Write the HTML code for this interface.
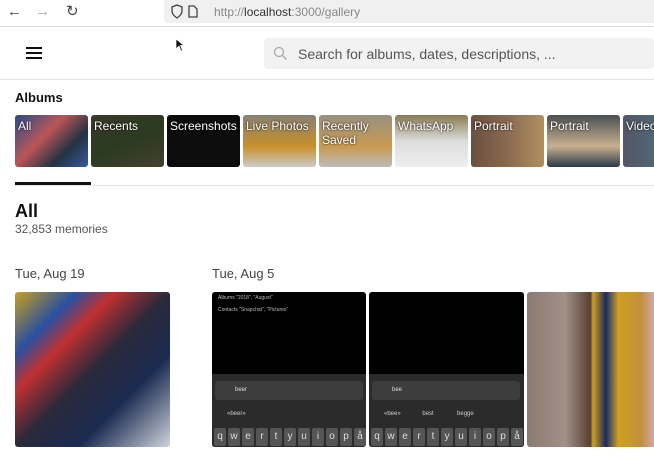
<!DOCTYPE html>
<html><head><meta charset="utf-8"><style>
*{margin:0;padding:0;box-sizing:border-box}
body{width:654px;height:459px;overflow:hidden;background:#fff;font-family:"Liberation Sans",sans-serif;position:relative;color:#111}
.a{position:absolute}
.th{position:absolute;top:115px;width:73px;height:52px;border-radius:3px;color:#fff;font-size:12px;padding:4px 3px;line-height:14px;overflow:hidden;text-shadow:0 0 2px #000}
.k{display:inline-block;width:12px;height:18px;background:#555;margin-right:2px;border-radius:2px;color:#ddd;font-size:10px;text-align:center;line-height:18px}
</style></head><body>
<div class="a" style="left:0;top:0;width:654px;height:27px;background:#fff;border-bottom:1px solid #ddd"></div>
<div class="a" style="left:7px;top:3px;font-size:15px;color:#444">←</div>
<div class="a" style="left:35px;top:3px;font-size:15px;color:#aaa">→</div>
<div class="a" style="left:66px;top:2px;font-size:15px;color:#444">↻</div>
<div class="a" style="left:164px;top:0;width:490px;height:23px;background:#f0f0f0;border-radius:0 0 0 4px"></div>
<svg class="a" style="left:170px;top:4px" width="30" height="15"><path d="M7 1 L12 3 V7 C12 10 10 12 7 14 C4 12 2 10 2 7 V3 Z" fill="none" stroke="#444" stroke-width="1.3"/><path d="M19 2 H24 L27 5 V13 H19 Z" fill="none" stroke="#444" stroke-width="1.3"/></svg>
<div class="a" style="left:214px;top:5px;font-size:12px;color:#888">http://<span style="color:#333">localhost</span>:3000/gallery</div>
<div class="a" style="left:26px;top:47px;width:16px;height:2px;background:#111;box-shadow:0 5px 0 #111,0 10px 0 #111"></div>
<div class="a" style="left:264px;top:38px;width:390px;height:31px;background:#f2f2f2;border-radius:4px"></div>
<svg class="a" style="left:273px;top:46px" width="15" height="15"><circle cx="6" cy="6" r="4.5" fill="none" stroke="#aaa" stroke-width="1.3"/><path d="M9.5 9.5 L13.5 13.5" stroke="#aaa" stroke-width="1.3"/></svg>
<div class="a" style="left:298px;top:46px;font-size:14px;color:#555">Search for albums, dates, descriptions, ...</div>
<div class="a" style="left:0;top:79px;width:654px;height:1px;background:#e4e4e4"></div>
<div class="a" style="left:15px;top:90px;font-size:13px;font-weight:bold">Albums</div>
<div class="th" style="left:15px;background:linear-gradient(135deg,#2a4a8a,#b55 40%,#234 70%,#3a5a9a)">All</div>
<div class="th" style="left:91px;background:linear-gradient(160deg,#3a3a28,#2a3a20 50%,#454030)">Recents</div>
<div class="th" style="left:167px;background:#0c0c0c">Screenshots</div>
<div class="th" style="left:243px;background:linear-gradient(180deg,#888070,#c8902a 60%,#ccc)">Live Photos</div>
<div class="th" style="left:319px;background:linear-gradient(180deg,#999080,#c89a50 60%,#bbb)">Recently Saved</div>
<div class="th" style="left:395px;background:linear-gradient(180deg,#8a7a50,#ddd 50%,#eee)">WhatsApp</div>
<div class="th" style="left:471px;background:linear-gradient(90deg,#6a5040,#8a6a50 50%,#b09060)">Portrait</div>
<div class="th" style="left:547px;background:linear-gradient(180deg,#4a5050,#c8b090 60%,#2a3a4a)">Portrait</div>
<div class="th" style="left:623px;background:linear-gradient(90deg,#556,#4a7a8a)">Video</div>
<div class="a" style="left:15px;top:185px;width:639px;height:1px;background:#e4e4e4"></div>
<div class="a" style="left:15px;top:182px;width:76px;height:3px;background:#111"></div>
<div class="a" style="left:15px;top:201px;font-size:18px;font-weight:bold">All</div>
<div class="a" style="left:15px;top:222px;font-size:12px;color:#555">32,853 memories</div>
<div class="a" style="left:15px;top:266px;font-size:13px;color:#444">Tue, Aug 19</div>
<div class="a" style="left:212px;top:266px;font-size:13px;color:#444">Tue, Aug 5</div>
<div class="a" style="left:15px;top:292px;width:155px;height:155px;border-radius:3px;background:linear-gradient(135deg,#c8a020 0,#2a50a0 20%,#c03030 32%,#2a2a3a 50%,#1a2a50 70%,#cfd4dc 100%)"></div>
<div class="a" style="left:212px;top:292px;width:154px;height:155px;border-radius:3px;background:#000;overflow:hidden">
<div class="a" style="left:6px;top:3px;font-size:5px;color:#bbb">Albums "2018", "August"<br><br>Contacts "Snapchat", "Pictures"</div>
<div class="a" style="left:0;top:82px;width:154px;height:73px;background:#2b2b2b"></div>
<div class="a" style="left:3px;top:89px;width:148px;height:19px;background:#3d3d3d;border-radius:3px;font-size:6px;color:#ddd;padding:6px 0 0 20px">beer</div>
<div class="a" style="left:15px;top:119px;font-size:6px;color:#ccc">«beer»</div>
<div class="a" style="left:2px;top:134px;white-space:nowrap"><span class="k">q</span><span class="k">w</span><span class="k">e</span><span class="k">r</span><span class="k">t</span><span class="k">y</span><span class="k">u</span><span class="k">i</span><span class="k">o</span><span class="k">p</span><span class="k">å</span></div>
</div>
<div class="a" style="left:369px;top:292px;width:155px;height:155px;border-radius:3px;background:#000;overflow:hidden">
<div class="a" style="left:0;top:82px;width:155px;height:73px;background:#2b2b2b"></div>
<div class="a" style="left:3px;top:89px;width:148px;height:19px;background:#3d3d3d;border-radius:3px;font-size:6px;color:#ddd;padding:6px 0 0 20px">bee</div>
<div class="a" style="left:15px;top:119px;font-size:6px;color:#ccc">«bee»&nbsp;&nbsp;&nbsp;&nbsp;&nbsp;&nbsp;&nbsp;&nbsp;&nbsp;&nbsp;&nbsp;&nbsp;&nbsp;best&nbsp;&nbsp;&nbsp;&nbsp;&nbsp;&nbsp;&nbsp;&nbsp;&nbsp;&nbsp;&nbsp;&nbsp;&nbsp;&nbsp;begge</div>
<div class="a" style="left:2px;top:134px;white-space:nowrap"><span class="k">q</span><span class="k">w</span><span class="k">e</span><span class="k">r</span><span class="k">t</span><span class="k">y</span><span class="k">u</span><span class="k">i</span><span class="k">o</span><span class="k">p</span><span class="k">å</span></div>
</div>
<div class="a" style="left:527px;top:292px;width:127px;height:155px;border-radius:3px 0 0 3px;background:linear-gradient(90deg,#8a7a70 0,#a09088 30%,#5a4030 50%,#d0a020 52%,#1a2a60 62%,#d0a020 72%,#c09040 90%,#caa)"></div>
<svg class="a" style="left:175px;top:38px" width="10" height="14"><path d="M1 1 V11 L4 8 L6 13 L7.5 12.5 L5.5 7.5 L9 7.5 Z" fill="#111" stroke="#fff" stroke-width=".7"/></svg>
</body></html>
